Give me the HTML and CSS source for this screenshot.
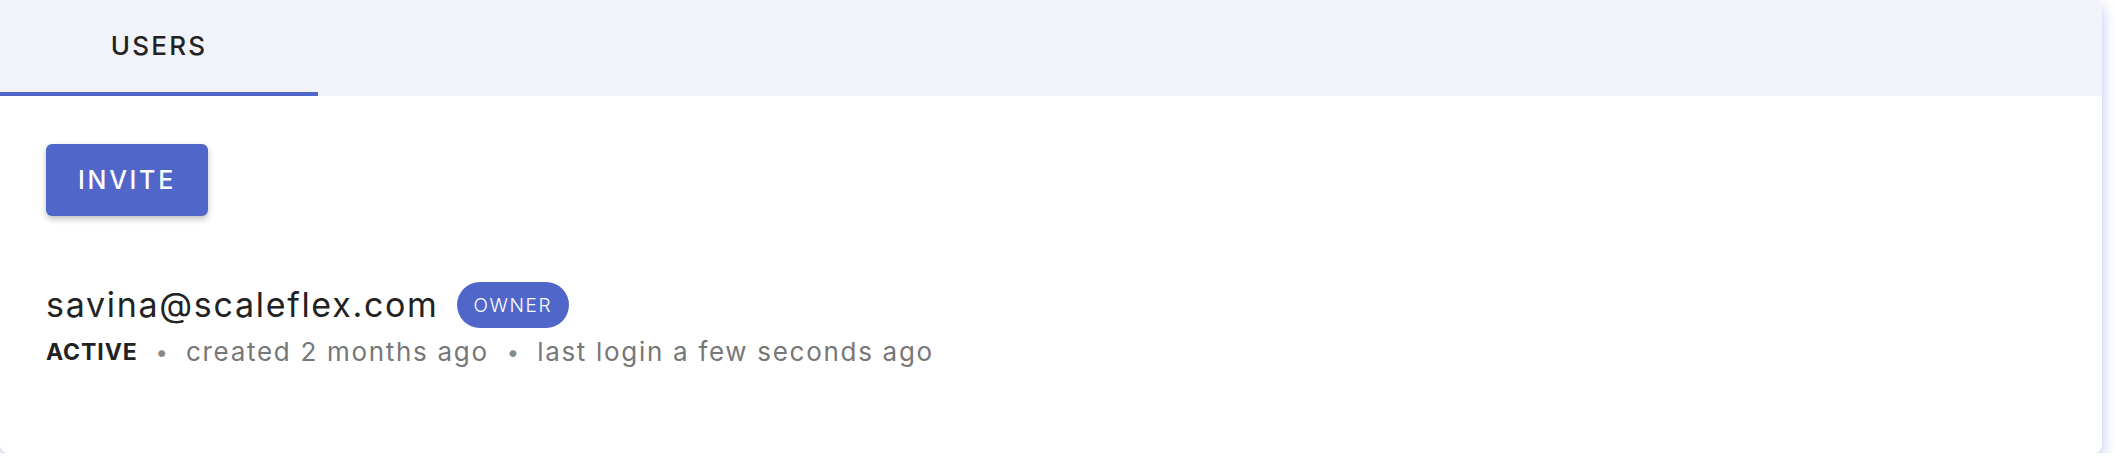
FILE: index.html
```html
<!DOCTYPE html>
<html lang="en">
<head>
    <meta charset="UTF-8">
    <title>Users</title>
    <link rel="stylesheet" href="styles.css">
</head>
<body>

    <!-- users panel -->
    <div class="card">
        <div class="tabs">
            <div class="tab active">USERS</div>
        </div>

        <div class="content">
            <button class="invite-button">INVITE</button>

            <div class="user">
                <div class="user-head">
                    <span class="user-email">savina@scaleflex.com</span>
                    <span class="role-badge">OWNER</span>
                </div>
                <div class="user-meta">
                    <span class="status">ACTIVE</span>
                    <span class="dot">&bull;</span>
                    <span>created 2 months ago</span>
                    <span class="dot">&bull;</span>
                    <span>last login a few seconds ago</span>
                </div>
            </div>
        </div>
    </div>

</body>
</html>
```

FILE: styles.css
```css
body {
    margin: 0;
    background-color: #fff;
    font-family: Inter, "Noto Sans", sans-serif;
    color: #222;
}

/* panel */
.card {
    width: 2102px;
    height: 453px;
    background-color: #fff;
    border-radius: 0 8px 8px 8px;
    box-shadow: 0 5px 14px rgba(81, 102, 201, 0.4);
    overflow: hidden;
}

.tabs {
    display: flex;
    height: 96px;
    background-color: #f2f2fb;
}

.tab {
    width: 318px;
    box-sizing: border-box;
    display: flex;
    align-items: center;
    justify-content: center;
    padding-bottom: 2px;
    font-size: 26px;
    font-weight: 500;
    letter-spacing: 2.2px;
    color: #222;
}

.tab.active {
    border-bottom: 4px solid #5166c9;
}

.content {
    padding: 48px 46px 0;
}

.invite-button {
    width: 162px;
    height: 72px;
    border: none;
    border-radius: 6px;
    background-color: #5166c9;
    color: #fff;
    font-family: Inter, "Noto Sans", sans-serif;
    font-size: 25px;
    font-weight: 500;
    letter-spacing: 2.7px;
    box-shadow: 0 3px 6px rgba(0, 0, 0, 0.25);
    cursor: pointer;
}

.user {
    margin-top: 66px;
}

.user-head {
    display: flex;
    align-items: center;
    gap: 18px;
}

.user-email {
    font-size: 34px;
    line-height: 44px;
    letter-spacing: 1.7px;
    color: #222;
}

.role-badge {
    display: inline-flex;
    align-items: center;
    height: 46px;
    padding: 0 17px;
    border-radius: 23px;
    background-color: #5166c9;
    color: #fff;
    font-size: 19px;
    font-weight: 300;
    letter-spacing: 1.6px;
}

.user-meta {
    display: flex;
    align-items: center;
    gap: 18px;
    margin-top: 8px;
    font-size: 26px;
    line-height: 32px;
    letter-spacing: 1.7px;
    color: #777;
}

.status {
    font-size: 23px;
    font-weight: 700;
    color: #222;
    letter-spacing: 0.9px;
}

.dot {
    color: #888;
    font-size: 22px;
    letter-spacing: 0;
}
```
